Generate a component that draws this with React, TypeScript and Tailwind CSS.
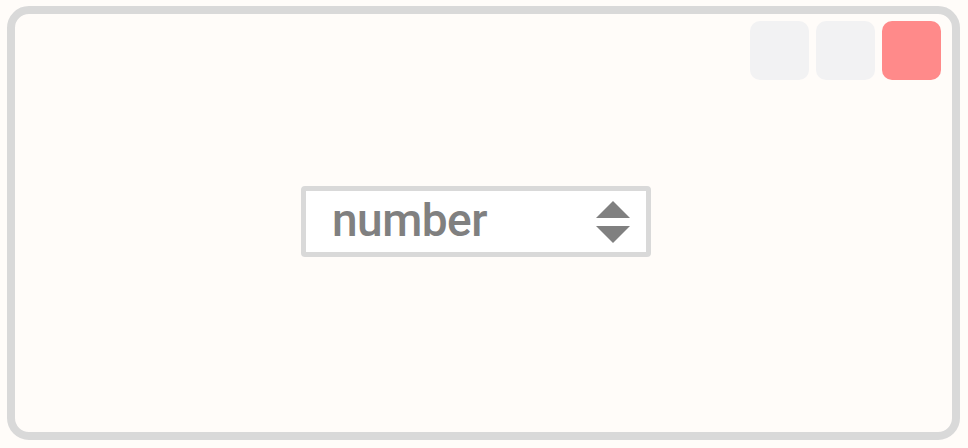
const App = () => {
  return (
    <div className="w-[968px] h-[448px] bg-[#fffcf9] pl-[7px] pr-[8px] pt-[6px] pb-[8px]">
      <div className="relative w-full h-full rounded-[22px] border-[8px] border-[#d9d9d9] bg-[#fffcf9]">
        <div className="absolute top-[7px] right-[11px] flex gap-[7px]">
          <div className="w-[59px] h-[59px] rounded-[10px] bg-[#f2f2f3]" />
          <div className="w-[59px] h-[59px] rounded-[10px] bg-[#f2f2f3]" />
          <div className="w-[59px] h-[59px] rounded-[10px] bg-[#ff8a8a]" />
        </div>
        <div className="flex h-full items-center justify-center pr-[15px] pb-[3px]">
          <div className="flex h-[71px] w-[350px] items-center justify-between rounded-[4px] border-[5px] border-[#d9d9d9] bg-white pl-[26px] pr-[16px]">
            <span
              className="text-[46px] font-medium leading-none text-[#808080] tracking-[-0.5px] pb-[4px]"
              style={{ fontFamily: "Roboto, 'Noto Sans', sans-serif" }}
            >
              number
            </span>
            <svg width="34" height="42" viewBox="0 0 34 42">
              <polygon points="17,0 34,17 0,17" fill="#808080" />
              <polygon points="0,25 34,25 17,42" fill="#808080" />
            </svg>
          </div>
        </div>
      </div>
    </div>
  );
};

export default App;
